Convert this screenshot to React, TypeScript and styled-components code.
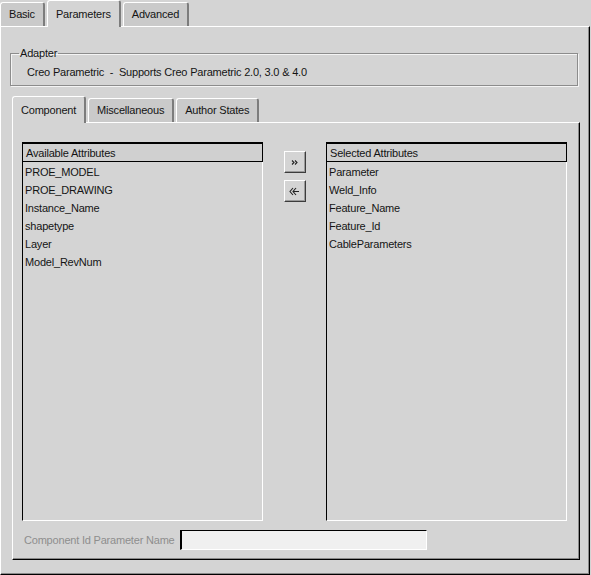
import styled, { createGlobalStyle } from 'styled-components';

const GlobalStyle = createGlobalStyle`
  body {
    margin: 0;
    background-color: #d4d4d4;
    font-family: "Liberation Sans", Arial, sans-serif;
    font-size: 11px;
    letter-spacing: -0.2px;
    color: #141414;
  }
`;

const Window = styled.div`
  width: 591px;
  height: 575px;
  box-sizing: border-box;
  background-color: #d4d4d4;
  display: flex;
  flex-direction: column;
`;

const TabBar = styled.div<{ $height: number }>`
  display: flex;
  align-items: flex-end;
  gap: 2px;
  height: ${(p) => p.$height}px;
  position: relative;
  z-index: 1;
`;

const Tab = styled.div<{ $active?: boolean; $height: number }>`
  box-sizing: border-box;
  height: ${(p) => (p.$active ? p.$height + 1 : p.$height - 2)}px;
  margin-bottom: ${(p) => (p.$active ? -1 : 0)}px;
  padding: 0 8px;
  display: flex;
  align-items: center;
  background-color: ${(p) => (p.$active ? '#d4d4d4' : '#cacaca')};
  border-top: 1px solid #ffffff;
  border-left: 1px solid #ffffff;
  border-right: 2px solid #7c7c7c;
  border-radius: 3px 3px 0 0;
  white-space: nowrap;
  line-height: 13px;
`;

const Panel = styled.div<{ $pad: string }>`
  box-sizing: border-box;
  flex: 1;
  display: flex;
  flex-direction: column;
  padding: ${(p) => p.$pad};
  border-top: 1px solid #ffffff;
  border-left: 1px solid #ffffff;
  border-right: 1px solid #000000;
  border-bottom: 1px solid #000000;
  box-shadow: inset -1px -1px 0 #8a8a8a;
`;

const OuterArea = styled.div`
  display: flex;
  flex-direction: column;
  height: 549px;
  margin-right: 1px;
`;

const Group = styled.fieldset`
  margin: 0;
  padding: 6px 12px 6px 16px;
  border: 1px solid #8c8c8c;
  box-shadow: inset 1px 1px 0 #f4f4f4, 1px 1px 0 #f4f4f4;
  min-width: 0;
`;

const Legend = styled.legend`
  padding: 0 1px;
  margin-left: -8px;
  line-height: 13px;
`;

const GroupText = styled.div`
  line-height: 13px;
  white-space: pre;
`;

const InnerArea = styled.div`
  display: flex;
  flex-direction: column;
  height: 464px;
  margin: 10px -2px 0 2px;
`;

const Columns = styled.div`
  display: grid;
  grid-template-columns: 241px 1fr 241px;
  height: 379px;
`;

const List = styled.div`
  display: flex;
  flex-direction: column;
  min-height: 0;
`;

const ListHeader = styled.div`
  box-sizing: border-box;
  height: 20px;
  padding: 0 3px;
  display: flex;
  align-items: center;
  border: 1px solid #000000;
  border-top-width: 2px;
  background-color: #d0d0d0;
`;

const ListBody = styled.div`
  flex: 1;
  padding-top: 1px;
  border-left: 1px solid #000000;
  border-right: 1px solid #ffffff;
  border-bottom: 1px solid #ffffff;
`;

const ListItem = styled.div`
  height: 18px;
  line-height: 18px;
  padding-left: 2px;
`;

const ButtonColumn = styled.div`
  display: flex;
  flex-direction: column;
  align-items: center;
  gap: 7px;
  padding-top: 9px;
`;

const MoveButton = styled.button`
  box-sizing: border-box;
  width: 22px;
  height: 22px;
  padding: 0;
  display: flex;
  align-items: center;
  justify-content: center;
  background-color: #d4d4d4;
  border-top: 1px solid #ffffff;
  border-left: 1px solid #ffffff;
  border-right: 1px solid #3c3c3c;
  border-bottom: 1px solid #3c3c3c;
  box-shadow: inset -1px -1px 0 #9a9a9a;
  cursor: default;
`;

const BottomRow = styled.div`
  display: flex;
  align-items: center;
  margin-top: 9px;
  padding-left: 2px;
`;

const DisabledLabel = styled.span`
  color: #8e8e8e;
  white-space: nowrap;
  width: 156px;
`;

const TextInput = styled.input`
  box-sizing: border-box;
  width: 247px;
  height: 20px;
  margin: 0;
  background-color: #f0f0f0;
  border-top: 1px solid #000000;
  border-left: 2px solid #000000;
  border-right: 1px solid #ffffff;
  border-bottom: 1px solid #ffffff;
  outline: none;
`;

const available = ['PROE_MODEL', 'PROE_DRAWING', 'Instance_Name', 'shapetype', 'Layer', 'Model_RevNum'];
const selected = ['Parameter', 'Weld_Info', 'Feature_Name', 'Feature_Id', 'CableParameters'];

function AddIcon() {
  return (
    <svg width="9" height="7" viewBox="0 0 9 7">
      <path d="M2 1.5 L4 3.5 L2 5.5 M5 1.5 L7 3.5 L5 5.5" stroke="#222" strokeWidth="1.1" fill="none" />
    </svg>
  );
}

function RemoveIcon() {
  return (
    <svg width="11" height="9" viewBox="0 0 11 9">
      <path d="M4 1 L1 4.5 L4 8 M7 1 L4 4.5 L7 8 M4 4.5 H10" stroke="#222" strokeWidth="1.1" fill="none" />
    </svg>
  );
}

function AttrList({ title, items }: { title: string; items: string[] }) {
  return (
    <List>
      <ListHeader>{title}</ListHeader>
      <ListBody>
        {items.map((item) => (
          <ListItem key={item}>{item}</ListItem>
        ))}
      </ListBody>
    </List>
  );
}

export default function App() {
  return (
    <Window>
      <GlobalStyle />
      <TabBar $height={26}>
        <Tab $height={26}>Basic</Tab>
        <Tab $height={26} $active>Parameters</Tab>
        <Tab $height={26}>Advanced</Tab>
      </TabBar>
      <OuterArea>
        <Panel $pad="20px 11px 0 9px">
          <Group>
            <Legend>Adapter</Legend>
            <GroupText>{'Creo Parametric  -  Supports Creo Parametric 2.0, 3.0 & 4.0'}</GroupText>
          </Group>
          <InnerArea>
            <TabBar $height={26}>
              <Tab $height={26} $active>Component</Tab>
              <Tab $height={26}>Miscellaneous</Tab>
              <Tab $height={26}>Author States</Tab>
            </TabBar>
            <Panel $pad="19px 12px 0 9px">
              <Columns>
                <AttrList title="Available Attributes" items={available} />
                <ButtonColumn>
                  <MoveButton aria-label="Add">
                    <AddIcon />
                  </MoveButton>
                  <MoveButton aria-label="Remove">
                    <RemoveIcon />
                  </MoveButton>
                </ButtonColumn>
                <AttrList title="Selected Attributes" items={selected} />
              </Columns>
              <BottomRow>
                <DisabledLabel>Component Id Parameter Name</DisabledLabel>
                <TextInput disabled />
              </BottomRow>
            </Panel>
          </InnerArea>
        </Panel>
      </OuterArea>
    </Window>
  );
}
